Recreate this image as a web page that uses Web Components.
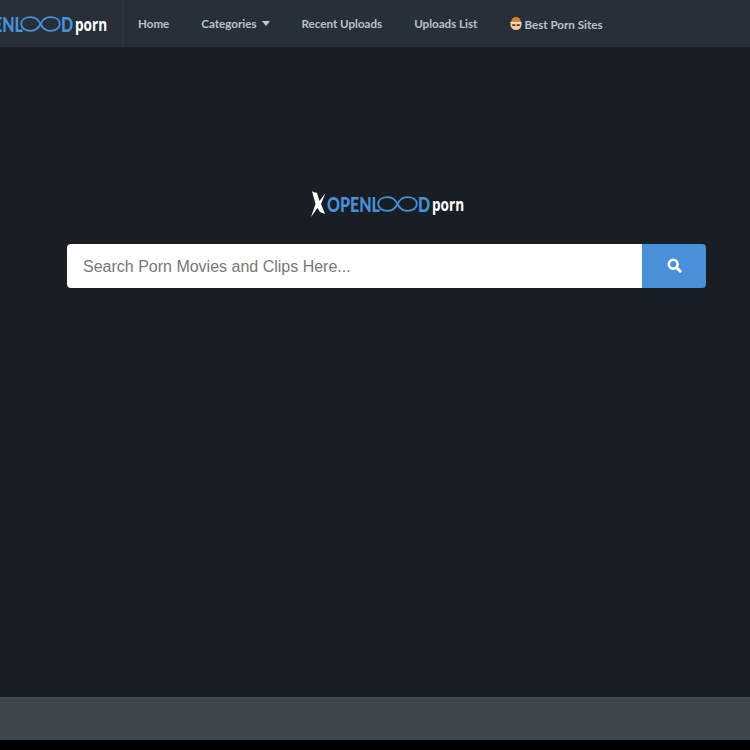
<!DOCTYPE html>
<html>
<head>
<meta charset="utf-8">
<title>Openload Porn</title>
<style>
  html { background: #000; }
  body { margin: 0; height: 750px; overflow: hidden; display: flex; flex-direction: column; }
</style>
</head>
<body>
<site-header>
  <nav-link>Home</nav-link>
  <nav-link caret>Categories</nav-link>
  <nav-link>Recent Uploads</nav-link>
  <nav-link>Uploads List</nav-link>
  <nav-link face>Best Porn Sites</nav-link>
</site-header>
<search-hero placeholder="Search Porn Movies and Clips Here..."></search-hero>
<site-footer></site-footer>

<script>
class SiteLogo extends HTMLElement {
  constructor() {
    super();
    this.attachShadow({ mode: "open" });
    this.shadowRoot.innerHTML = `
      <style>
        :host {
          display: flex;
          align-items: center;
          width: 154px;
          height: 28px;
          flex: none;
        }
        .x { flex: none; margin-right: 1px; }
        .letters {
          display: block;
          flex: none;
          font: 900 20px/28px "Lato", sans-serif;
          color: #4a90d9;
          transform-origin: left center;
          transform: scaleX(.8);
          white-space: nowrap;
        }
        .openl { width: 50px; }
        .d { width: 11px; margin-right: 3px; }
        .loop { flex: none; }
        .porn {
          display: block;
          flex: none;
          width: 32px;
          font: 700 17px/28px "Open Sans", sans-serif;
          color: #fff;
          transform-origin: left center;
          transform: scaleX(.8);
          position: relative;
          top: 1px;
        }
      </style>
      <svg class="x" width="16" height="28" viewBox="0 0 16 28">
        <path d="M2 1 C4 3 6 2 7 3 L9.5 11 L15.5 3 L11 14 L15 24 L10 22 L7.5 18 L1 27 L5.5 14 Z" fill="#fff"/>
      </svg>
      <span class="letters openl">OPENL</span>
      <svg class="loop" width="41" height="16" viewBox="0 0 41 16">
        <path d="M20.5 8 C18 3 15 1.2 11 1.2 C5 1.2 1.2 4 1.2 8 C1.2 12 5 14.8 11 14.8 C15 14.8 18 13 20.5 8 C23 3 26 1.2 30 1.2 C36 1.2 39.8 4 39.8 8 C39.8 12 36 14.8 30 14.8 C26 14.8 23 13 20.5 8 Z" fill="none" stroke="#4a90d9" stroke-width="1.8"/>
      </svg>
      <span class="letters d">D</span>
      <span class="porn">porn</span>
    `;
  }
}
customElements.define("site-logo", SiteLogo);

class NavLink extends HTMLElement {
  constructor() {
    super();
    this.attachShadow({ mode: "open" });
    const caret = this.hasAttribute("caret")
      ? `<svg class="caret" width="8" height="5" viewBox="0 0 8 5"><path d="M0 0H8L4 5Z" fill="#c4cad1"/></svg>` : "";
    const face = this.hasAttribute("face")
      ? `<svg class="face" width="12" height="13" viewBox="0 0 12 13">
           <circle cx="6" cy="7.5" r="5.5" fill="#f2c9a0"/>
           <path d="M1 6 C1 1.5 4 0 6 0 C8 0 11 1.5 11 6 Z" fill="#d9822b"/>
           <rect x=".5" y="5" width="11" height="1.4" fill="#f5e6c8"/>
           <rect x="2.3" y="7.2" width="3" height="1.8" fill="#5a3a20"/>
           <rect x="6.7" y="7.2" width="3" height="1.8" fill="#5a3a20"/>
         </svg>` : "";
    this.shadowRoot.innerHTML = `
      <style>
        :host {
          display: flex;
          align-items: center;
          gap: 5px;
          font: 700 11.6px/16px "Lato", sans-serif;
          color: #bcc3cb;
          white-space: nowrap;
        }
        :host([face]) { gap: 2px; padding-top: 2px; }
        .face { margin: -3px 0 0 1px; }
      </style>
      ${face}<slot></slot>${caret}
    `;
  }
}
customElements.define("nav-link", NavLink);

class SiteHeader extends HTMLElement {
  constructor() {
    super();
    this.attachShadow({ mode: "open" });
    this.shadowRoot.innerHTML = `
      <style>
        :host {
          display: flex;
          flex: none;
          height: 47px;
          background: #272f39;
          overflow: hidden;
        }
        .brand {
          display: flex;
          align-items: center;
          margin-left: -47px;
          padding-right: 15px;
          border-right: 1px solid #2e3641;
        }
        nav {
          display: flex;
          align-items: center;
          gap: 32px;
          padding-left: 15px;
        }
      </style>
      <div class="brand"><site-logo></site-logo></div>
      <nav><slot></slot></nav>
    `;
  }
}
customElements.define("site-header", SiteHeader);

class SearchBox extends HTMLElement {
  constructor() {
    super();
    this.attachShadow({ mode: "open" });
    this.shadowRoot.innerHTML = `
      <style>
        :host {
          display: flex;
          width: 639px;
          height: 44px;
          border-radius: 4px;
          overflow: hidden;
        }
        input {
          flex: 1;
          min-width: 0;
          border: 0;
          outline: 0;
          margin: 0;
          padding: 2px 16px 0;
          background: #fff;
          font: 16px "Liberation Sans", Arial, sans-serif;
          color: #333;
        }
        input::placeholder { color: #777; opacity: 1; }
        button {
          flex: none;
          width: 64px;
          border: 0;
          padding: 0 0 2px 0;
          background: #4a90d9;
          display: flex;
          align-items: center;
          justify-content: center;
        }
      </style>
      <input type="text" placeholder="${this.getAttribute("placeholder") || ""}">
      <button type="button" aria-label="Search">
        <svg width="15" height="15" viewBox="0 0 15 15">
          <circle cx="6.2" cy="6.2" r="4.4" fill="none" stroke="#fff" stroke-width="2.6"/>
          <path d="M9.6 9.6 L13.2 13.2" stroke="#fff" stroke-width="3" stroke-linecap="round"/>
        </svg>
      </button>
    `;
  }
}
customElements.define("search-box", SearchBox);

class SearchHero extends HTMLElement {
  constructor() {
    super();
    this.attachShadow({ mode: "open" });
    this.shadowRoot.innerHTML = `
      <style>
        :host {
          display: flex;
          flex-direction: column;
          flex: 1;
          background: #191e25;
          padding: 143px 44px 0 67px;
          gap: 26px;
          align-items: flex-start;
        }
        .logo-row { padding-left: 243px; }
      </style>
      <div class="logo-row"><site-logo></site-logo></div>
      <search-box placeholder="${this.getAttribute("placeholder") || ""}"></search-box>
    `;
  }
}
customElements.define("search-hero", SearchHero);

class SiteFooter extends HTMLElement {
  constructor() {
    super();
    this.attachShadow({ mode: "open" });
    this.shadowRoot.innerHTML = `
      <style>
        :host {
          display: block;
          flex: none;
          height: 43px;
          margin-bottom: 10px;
          background: #3e464e;
          border-top: 1px solid #454d55;
          box-sizing: border-box;
        }
      </style>
    `;
  }
}
customElements.define("site-footer", SiteFooter);
</script>
</body>
</html>
